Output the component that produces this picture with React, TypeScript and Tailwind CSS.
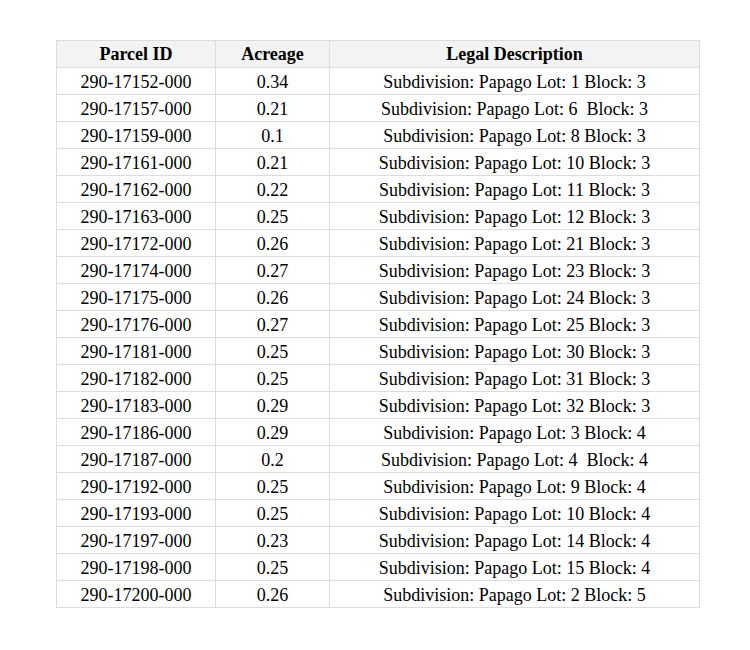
const rows: [string, string, string][] = [
  ['290-17152-000', '0.34', 'Subdivision: Papago Lot: 1 Block: 3'],
  ['290-17157-000', '0.21', 'Subdivision: Papago Lot: 6\u00a0 Block: 3'],
  ['290-17159-000', '0.1', 'Subdivision: Papago Lot: 8 Block: 3'],
  ['290-17161-000', '0.21', 'Subdivision: Papago Lot: 10 Block: 3'],
  ['290-17162-000', '0.22', 'Subdivision: Papago Lot: 11 Block: 3'],
  ['290-17163-000', '0.25', 'Subdivision: Papago Lot: 12 Block: 3'],
  ['290-17172-000', '0.26', 'Subdivision: Papago Lot: 21 Block: 3'],
  ['290-17174-000', '0.27', 'Subdivision: Papago Lot: 23 Block: 3'],
  ['290-17175-000', '0.26', 'Subdivision: Papago Lot: 24 Block: 3'],
  ['290-17176-000', '0.27', 'Subdivision: Papago Lot: 25 Block: 3'],
  ['290-17181-000', '0.25', 'Subdivision: Papago Lot: 30 Block: 3'],
  ['290-17182-000', '0.25', 'Subdivision: Papago Lot: 31 Block: 3'],
  ['290-17183-000', '0.29', 'Subdivision: Papago Lot: 32 Block: 3'],
  ['290-17186-000', '0.29', 'Subdivision: Papago Lot: 3 Block: 4'],
  ['290-17187-000', '0.2', 'Subdivision: Papago Lot: 4\u00a0 Block: 4'],
  ['290-17192-000', '0.25', 'Subdivision: Papago Lot: 9 Block: 4'],
  ['290-17193-000', '0.25', 'Subdivision: Papago Lot: 10 Block: 4'],
  ['290-17197-000', '0.23', 'Subdivision: Papago Lot: 14 Block: 4'],
  ['290-17198-000', '0.25', 'Subdivision: Papago Lot: 15 Block: 4'],
  ['290-17200-000', '0.26', 'Subdivision: Papago Lot: 2 Block: 5'],
];

export default function App() {
  return (
    <div className="w-[750px] h-[650px] bg-white pt-[40px] pl-[56px] font-['Liberation_Serif','Times_New_Roman',serif] text-[18px] text-black">
      <table className="border-collapse table-fixed w-[643px]">
        <colgroup>
          <col className="w-[159px]" />
          <col className="w-[114px]" />
          <col className="w-[370px]" />
        </colgroup>
        <thead>
          <tr className="bg-[#f3f3f3] h-[27px]">
            <th className="border border-[#dcdcdc] font-bold leading-none p-0">Parcel ID</th>
            <th className="border border-[#dcdcdc] font-bold leading-none p-0">Acreage</th>
            <th className="border border-[#dcdcdc] font-bold leading-none p-0">Legal Description</th>
          </tr>
        </thead>
        <tbody>
          {rows.map(([id, acres, desc]) => (
            <tr key={id} className="h-[27px]">
              <td className="border border-[#dcdcdc] text-center leading-none p-0 pt-px">{id}</td>
              <td className="border border-[#dcdcdc] text-center leading-none p-0 pt-px">{acres}</td>
              <td className="border border-[#dcdcdc] text-center leading-none p-0 pt-px whitespace-pre">{desc}</td>
            </tr>
          ))}
        </tbody>
      </table>
    </div>
  );
}
